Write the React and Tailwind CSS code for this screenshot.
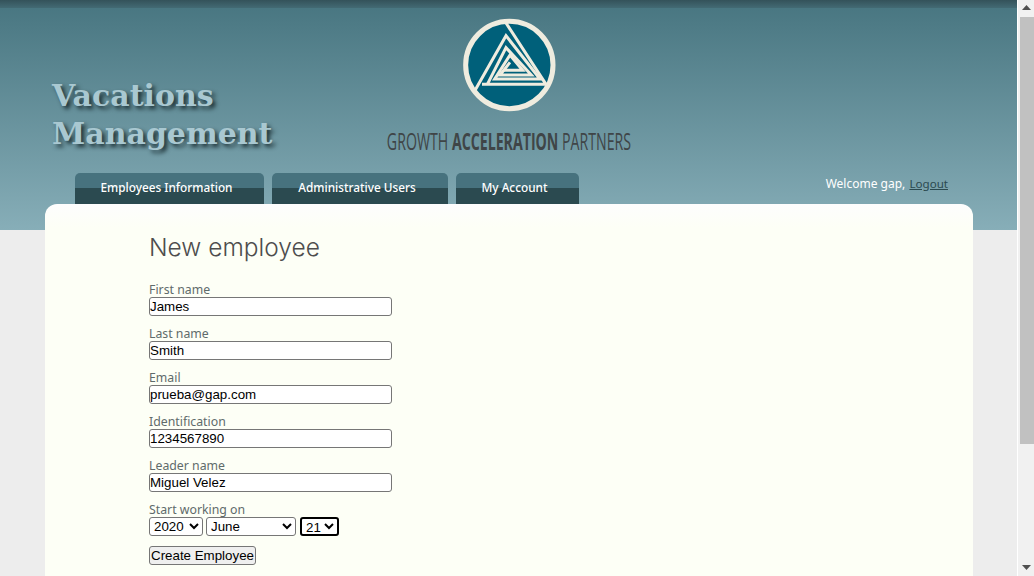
import React from "react";

const fields = [
  { label: "First name", value: "James" },
  { label: "Last name", value: "Smith" },
  { label: "Email", value: "prueba@gap.com" },
  { label: "Identification", value: "1234567890" },
  { label: "Leader name", value: "Miguel Velez" },
];

const tabs = [
  { name: "Employees Information", width: "w-[189px]" },
  { name: "Administrative Users", width: "w-[176px]" },
  { name: "My Account", width: "w-[123px]" },
];

const Logo = () => (
  <svg width="100" height="100" viewBox="0 0 300 300" className="mt-[7px] ml-[2px] shrink-0">
    <circle cx="148" cy="150" r="131" fill="#00607a" stroke="#efecdf" strokeWidth="15" />
    <g fill="none" stroke="#efecdf" strokeWidth="9" strokeLinejoin="miter">
      <path d="M44 228 L138 62 L240 192 L104 192 L150 120 L188 166 L132 166" />
      <path d="M138 24 L258 208 L66 208" />
      <path d="M82 208 L138 98 L214 180 L120 180 L150 142" />
    </g>
  </svg>
);

const Header = () => (
  <header className="h-[230px] bg-gradient-to-b from-[#477580] to-[#87aeb8] flex flex-col">
    <div className="h-[8px] bg-gradient-to-b from-[#34525a] to-[#436a74]" />
    <div className="grid grid-cols-[1fr_260px_1fr] h-[157px]">
      <h1 className="pl-[52px] pt-[69px] font-['DejaVu_Serif'] font-bold text-[30px] leading-[38px] text-[#a9c8d1] [text-shadow:3px_3px_4px_#1d3136]">
        Vacations
        <br />
        Management
      </h1>
      <div className="flex flex-col items-center">
        <Logo />
        <div className="mt-[11px] whitespace-nowrap font-['Open_Sans'] text-[24px] leading-[30px] text-[#3f4547] scale-x-[0.59]">
          GROWTH <span className="font-bold">ACCELERATION</span> PARTNERS
        </div>
      </div>
    </div>
    <div className="flex justify-between items-start pl-[75px] pr-[69px] mt-[8px]">
      <nav className="flex gap-[8px]">
        {tabs.map((tab) => (
          <a
            key={tab.name}
            className={`${tab.width} h-[31px] pr-[6px] rounded-t-[5px] bg-[linear-gradient(#47727e_0,#47727e_15px,#2b4a50_15px)] text-center text-white font-['Noto_Sans'] font-medium text-[11.8px] leading-[29px]`}
          >
            {tab.name}
          </a>
        ))}
      </nav>
      <div className="mt-[1px] font-['Noto_Sans'] text-[12px] leading-[20px] text-white">
        Welcome gap, <a className="underline text-[#2b4a50] text-[11.6px] ml-[1px]">Logout</a>
      </div>
    </div>
  </header>
);

const labelClass = "block font-['Noto_Sans'] text-[12.3px] leading-[19px] text-[#5f6b6b] h-[17px]";

const Field = ({ label, value }) => (
  <div className="mb-[8px]">
    <label className={labelClass}>{label}</label>
    <input
      type="text"
      defaultValue={value}
      className="block w-[243px] h-[19px] border border-[#767676] rounded-[3px] bg-white text-black font-['Liberation_Sans'] text-[13.33px]"
    />
  </div>
);

const selectClass =
  "h-[19px] rounded-[3px] bg-white text-black font-['Liberation_Sans'] text-[13.33px]";

const Scrollbar = () => (
  <div className="w-[17px] h-[576px] bg-[#f1f1f1] border-l border-white flex flex-col items-center">
    <svg width="9" height="17" viewBox="0 0 9 17" className="shrink-0">
      <path d="M4.5 5 L9 10 H0 Z" fill="#505050" />
    </svg>
    <div className="w-[14px] h-[427px] bg-[#c1c1c1] ml-[1px]" />
    <div className="flex-1" />
    <svg width="9" height="17" viewBox="0 0 9 17" className="shrink-0">
      <path d="M0 6 H9 L4.5 11 Z" fill="#505050" />
    </svg>
  </div>
);

export default function App() {
  return (
    <div className="flex h-[576px] overflow-hidden bg-[#ededed]">
      <div className="w-[1017px]">
        <Header />
        <main className="ml-[45px] w-[928px] -mt-[26px] h-[500px] rounded-t-[12px] bg-gradient-to-b from-[#fdfdfd] to-[#fdfff6] to-[24px] pl-[104px] pt-[27px]">
          <h2 className="font-['Inter'] font-light text-[24.5px] leading-[32px] text-[#4d4d4d] mb-[17px]">New employee</h2>
          <form>
            {fields.map((field) => (
              <Field key={field.label} {...field} />
            ))}
            <div className="mb-[10px]">
              <label className={labelClass}>Start working on</label>
              <div className="flex items-center">
                <select defaultValue="2020" className={`${selectClass} border border-[#767676] w-[54px]`}>
                  <option>2019</option>
                  <option>2020</option>
                  <option>2021</option>
                </select>
                <select defaultValue="June" className={`${selectClass} border border-[#767676] w-[90px] ml-[3px]`}>
                  <option>May</option>
                  <option>June</option>
                  <option>July</option>
                </select>
                <select defaultValue="21" className={`${selectClass} border-2 border-black w-[39px] ml-[4px]`}>
                  <option>20</option>
                  <option>21</option>
                  <option>22</option>
                </select>
              </div>
            </div>
            <button
              type="button"
              className="block w-[107px] h-[19px] whitespace-nowrap rounded-[3px] border border-[#767676] bg-[#efefef] text-black font-['Liberation_Sans'] text-[13.33px] leading-[15px]"
            >
              Create Employee
            </button>
          </form>
        </main>
      </div>
      <Scrollbar />
    </div>
  );
}
